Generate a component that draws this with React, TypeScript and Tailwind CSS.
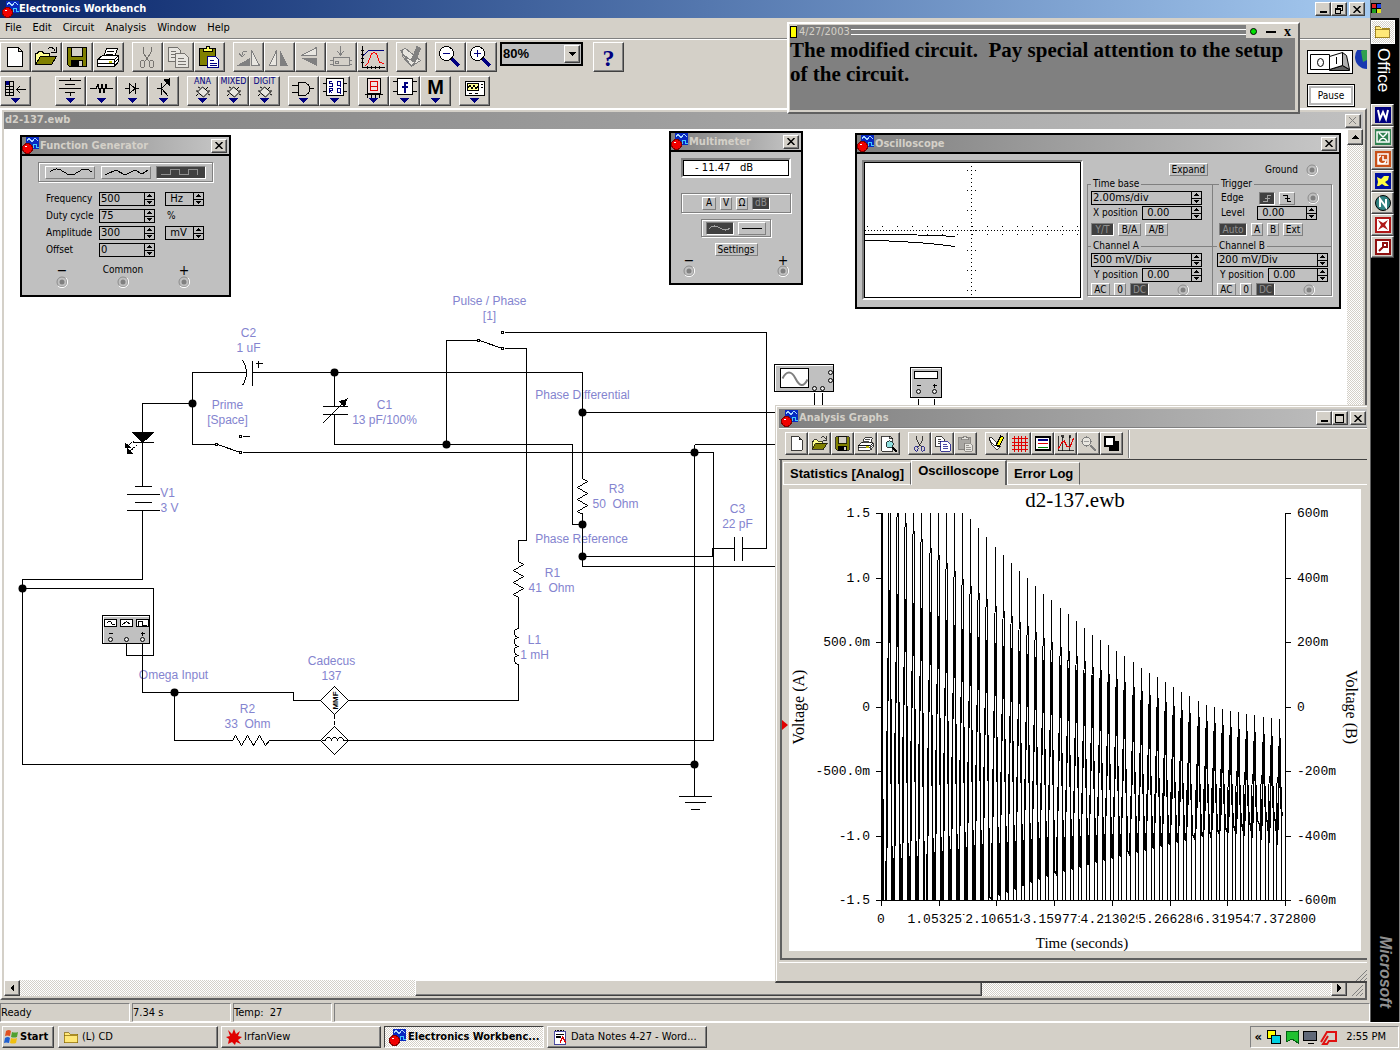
import { useState } from "react";
import type { ReactNode } from "react";

const raised =
  "border border-t-white border-l-white border-r-[#404040] border-b-[#404040] bg-[#d4d0c8] shadow-[inset_-1px_-1px_0_#808080]";
const dither =
  "bg-[repeating-conic-gradient(#ffffff_0_25%,#d4d0c8_0_50%)] bg-[length:2px_2px]";
const tahoma = "font-['DejaVu_Sans_Condensed','Noto_Sans',sans-serif]";

function Svg({ w, h, box, children }: { w: number; h: number; box?: string; children: ReactNode }) {
  return (
    <svg
      width={w}
      height={h}
      viewBox={box ?? `0 0 ${w} ${h}`}
      shapeRendering="crispEdges"
      fill="none"
      stroke="black"
      className="block shrink-0"
      aria-hidden="true"
    >
      {children}
    </svg>
  );
}

/* ---------- icons ---------- */

function Logo() {
  return (
    <Svg w={17} h={17}>
      <rect x="4" y="0" width="13" height="12" fill="#0828c0" stroke="none" />
      <path d="M5 4l2-3 3 4 3-4 3 3" stroke="#a8d8ff" />
      <path d="M9 10.500h2v-3h3v3h3" stroke="#40c8ff" />
      <circle cx="5.500" cy="11.500" r="5" fill="#f00000" stroke="#800000" />
      <rect x="3" y="9" width="2" height="1" fill="white" stroke="none" />
    </Svg>
  );
}

const icons: Record<string, ReactNode> = {
  new: <path d="M4.500 2.500h11l4 4v15h-15zM15.500 2.500v4h4" fill="white" />,
  open: (
    <>
      <path d="M1.500 19.500v-11h2l1-2h4l1 2h6v3" fill="#ffff90" />
      <path d="M1.500 19.500l5-8h16l-5 8z" fill="#808000" />
      <path d="M14 4c3-3 6-1 7 2M22 2v5h-5" />
    </>
  ),
  save: (
    <>
      <path d="M2.500 2.500h19v19h-17l-2-2z" fill="#808000" />
      <rect x="6.500" y="2.500" width="11" height="9" fill="#d4d0c8" />
      <rect x="6" y="15" width="12" height="7" fill="black" stroke="none" />
      <rect x="14" y="16" width="3" height="5" fill="#d4d0c8" stroke="none" />
    </>
  ),
  print: (
    <>
      <path d="M7.500 12.500l3-9h11l-3 9z" fill="white" />
      <path d="M11 6h7M10 9h7" />
      <path d="M1.500 14.500l5-4h16l-4 4zM1.500 14.500h17v7h-17zM18.500 14.500l4-4v6l-4 5" fill="white" />
      <path d="M2 18h16M19 17l3-3" />
      <path d="M13 16.500h3" stroke="#c0c000" strokeWidth="2" />
    </>
  ),
  cut: (
    <>
      <path d="M8 2v5l4 7M16 2v5l-4 7M12 14l-3 3M12 14l3 3" />
      <ellipse cx="7.500" cy="19" rx="2.500" ry="3.500" stroke="#000080" />
      <ellipse cx="16.500" cy="19" rx="2.500" ry="3.500" stroke="#000080" />
    </>
  ),
  copy: (
    <>
      <path d="M2.500 2.500h9l3 3v11h-12z" fill="white" />
      <path d="M5 6h5M5 9h6M5 12h4" />
      <path d="M9.500 8.500h9l4 4v10h-13z" fill="white" stroke="#000080" />
      <path d="M12 13h6M12 16h8M12 19h8" stroke="#000080" />
    </>
  ),
  paste: (
    <>
      <rect x="2.500" y="3.500" width="16" height="17" fill="#808000" />
      <path d="M6.500 6.500v-3h3v-2h3v2h3v3z" fill="#ffff60" />
      <path d="M10.500 11.500h8l3 3v8h-11z" fill="white" stroke="#000080" />
      <path d="M13 15h4M13 18h7M13 20h7" stroke="#000080" />
    </>
  ),
  rotate: (
    <>
      <path d="M15.500 20.500v-15l8 15z" fill="#e8e6e0" stroke="#808080" />
      <path d="M0 21l14-8v8z" fill="#808080" stroke="none" />
      <path d="M11 7c-3-2-5-1-5 3M3 8l3 4 3-3" stroke="#808080" />
    </>
  ),
  flipH: (
    <>
      <path d="M2.500 20.500l7-15v15z" fill="#e8e6e0" stroke="#808080" />
      <path d="M13 21v-16l8 16z" fill="#808080" stroke="none" />
    </>
  ),
  flipV: (
    <>
      <path d="M3.500 10.500h15v-8z" fill="#e8e6e0" stroke="#808080" />
      <path d="M3 13h16v8z" fill="#808080" stroke="none" />
    </>
  ),
  component: (
    <g stroke="#808080">
      <path d="M11.500 1v8M8 6l3.500 4L15 6M1 15.500h3M1 19.500h3M20 15.500h3M20 19.500h3" />
      <rect x="4.500" y="12.500" width="16" height="8" />
      <path d="M6 19v-3h3v3M6 18h3" />
    </g>
  ),
  graph: (
    <>
      <path d="M2.500 1v21h22M1 5h3M1 9h3M1 13h3M1 17h3M7 21v3M11 21v3M15 21v3M19 21v3" />
      <path d="M3 11l6-6h15" stroke="#000080" />
      <path d="M5 21l3-3 3-8c1-3 5-3 6 0l2 6c1 3 3 2 5 2" stroke="#ff0000" />
    </>
  ),
  note: (
    <>
      <path d="M1.500 5.500l5-2 15 12-9 6z" fill="#e8e6e0" stroke="#808080" />
      <path d="M3 4v7l9 10 4-3M5 10l6 5 4-4" stroke="#808080" />
      <path d="M20 2l-6 15" stroke="#808080" strokeWidth="5" />
    </>
  ),
  noteColor: (
    <>
      <path d="M1.500 3.500l5 1 11 11-5 6-7-7z" fill="white" />
      <path d="M4 9l6 6 5-5M2 4v5" />
      <path d="M20 2l-7 14" stroke="black" strokeWidth="6" />
      <path d="M20 3l-6 11" stroke="#ffff00" strokeWidth="3" />
    </>
  ),
  zoomOut: (
    <>
      <path d="M14 14l7 7" stroke="#000080" strokeWidth="4" />
      <circle cx="8.500" cy="8.500" r="7" fill="white" />
      <path d="M5 8.500h7" stroke="#000080" />
    </>
  ),
  zoomIn: (
    <>
      <path d="M14 14l7 7" stroke="#000080" strokeWidth="4" />
      <circle cx="8.500" cy="8.500" r="7" fill="white" />
      <path d="M5 8.500h7M8.500 5v7" stroke="#000080" />
    </>
  ),
  zoomGray: (
    <>
      <path d="M14 14l8 8" stroke="#808080" strokeWidth="3" />
      <circle cx="9" cy="9" r="6" fill="#e8e6e0" stroke="#808080" strokeWidth="2" />
      <path d="M6 9h6" stroke="#808080" />
    </>
  ),
  preview: (
    <>
      <path d="M2.500 1.500h11l4 4v17h-15zM13.500 1.500v4h4" fill="white" />
      <circle cx="13.500" cy="13" r="5" fill="#90e0e0" />
      <path d="M17 17l6 6" strokeWidth="3" />
    </>
  ),
  grid: <path d="M5 1v22M10 1v22M15 1v22M20 1v22M1 5h22M1 10h22M1 15h22M1 20h22" stroke="#e00000" strokeWidth="1.500" />,
  legend: (
    <>
      <rect x="2" y="3" width="20" height="18" fill="white" strokeWidth="2" />
      <path d="M5 7h14" stroke="#000080" strokeWidth="2" />
      <path d="M5 12h14" stroke="#e00000" strokeWidth="2" />
      <path d="M5 17h14" stroke="#008000" strokeWidth="2" />
    </>
  ),
  cursors: (
    <>
      <path d="M2 1v21h21M8 1v21M18 1v21M6 1h4l-2 3zM16 1h4l-2 3z" />
      <path d="M2 19l5-9 3-2 4 8 4 1 5-13" stroke="#e00000" strokeWidth="1.500" />
    </>
  ),
  invert: (
    <>
      <rect x="9" y="9" width="13" height="13" fill="black" />
      <rect x="3" y="3" width="12" height="12" fill="white" strokeWidth="2" />
    </>
  ),
  bin: (
    <>
      <path d="M2.500 2.500h8v14h-8zM6.500 2v15M2 7h9M2 10h9M2 13.500h9M14 10.500h9M17 7l-3 3.500 3 3.500" />
      <rect x="3" y="2" width="3" height="4" fill="#000080" stroke="none" />
    </>
  ),
  battery: <path d="M12.500 0v2M1 2.500h22M7 6.500h10M1 10.500h22M7 14.500h10M12.500 15v3" />,
  resistor: <path d="M1 10.500h6l2-4 2 8 2-8 2 8 2-8 1 4h6" />,
  diode: <path d="M5 10.500h4M9 5v11l6-5.500zM15.500 5v11M16 10.500h3" />,
  transistor: (
    <>
      <path d="M6 10.500h4M10.500 5v12M11 10l7-7M11 11l6 7" />
      <path d="M18 1v6l-5-5z" fill="black" />
    </>
  ),
  chip: (
    <>
      <path d="M12.500 3.500l8 7-7 8-8-7z" fill="#e0ddd4" />
      <path d="M11 3l-3-1M8 6l-3-1M5 10H3M13 19l2 1M17 15l3 1M20 11h2M15 5l3-3M7 14l-3 3" />
    </>
  ),
  gate: <path d="M1 7.500h6M1 14.500h6M7.500 4.500h5c8 0 8 13 0 13h-5zM19 10.500h4" />,
  flipflop: (
    <>
      <rect x="4.500" y="0.500" width="17" height="17" fill="white" />
      <path d="M1 5h3M1 13h3M22 5h3M22 13h3" />
      <path d="M10 3H7v2h3v3H7M7 15v-5h3v2H7l3 3M15 3h3v4h-3zM15 10h3v4h-3zM17 7l2 2M17 14l2 2" stroke="#000080" />
    </>
  ),
  display: (
    <>
      <rect x="6.500" y="0.500" width="13" height="15" fill="#f0e0e0" />
      <path d="M9.500 3.500h7v9h-7zM9.500 8h7" stroke="#e00000" />
      <path d="M4 16.500h18M6 17v3M10 17v3M14 17v3M18 17v3" />
    </>
  ),
  func: (
    <>
      <rect x="5.500" y="0.500" width="15" height="16" fill="white" />
      <path d="M1 3h4M1 13h4M21 3h4M21 13h4" />
      <path d="M15.500 4.500h-2l-1 1v9M10 8.500h6" stroke="#000080" strokeWidth="2" />
    </>
  ),
  scope: (
    <>
      <rect x="3.500" y="3.500" width="19" height="14" fill="white" />
      <rect x="5.500" y="5.500" width="11" height="7" fill="#ffff90" />
      <path d="M6 10l2-3 2 4 2-4 2 4 2-3M19 6h2M19 9h2M7 15h3M13 15h3" />
    </>
  ),
  folder: <path d="M1.500 5.500h7l2 2h11v13h-20zM2 9h19" fill="#ffe878" stroke="#806000" />,
  wordpad: (
    <>
      <rect x="3.500" y="3.500" width="16" height="19" fill="white" stroke="#000080" />
      <path d="M4 2h2M8 2h2M12 2h2M16 2h2M6 8h11M6 12h7" strokeWidth="2" />
      <path d="M12 20l4-8 4 8" stroke="#e00000" strokeWidth="2" />
    </>
  ),
};

function Icon({ name, size = 25, gray }: { name: string; size?: number; gray?: boolean }) {
  return (
    <span className={gray ? "opacity-45 grayscale" : ""}>
      <Svg w={size} h={size} box="0 0 25 25">
        {icons[name]}
      </Svg>
    </span>
  );
}

/* ---------- main toolbars ---------- */

type Tool = { icon: string; gray?: boolean };

const toolGroups: Tool[][] = [
  [{ icon: "new" }, { icon: "open" }, { icon: "save" }, { icon: "print" }],
  [{ icon: "cut", gray: true }, { icon: "copy", gray: true }, { icon: "paste" }],
  [{ icon: "rotate" }, { icon: "flipH" }, { icon: "flipV" }, { icon: "component" }, { icon: "graph" }],
  [{ icon: "note" }],
  [{ icon: "zoomOut" }, { icon: "zoomIn" }],
];

const partGroups: { icon: string; caption?: string }[][] = [
  [{ icon: "battery" }, { icon: "resistor" }, { icon: "diode" }, { icon: "transistor" }],
  [
    { icon: "chip", caption: "ANA" },
    { icon: "chip", caption: "MIXED" },
    { icon: "chip", caption: "DIGIT" },
  ],
  [{ icon: "gate" }, { icon: "flipflop" }],
  [{ icon: "display" }, { icon: "func" }, { icon: "M" }],
  [{ icon: "scope" }],
];

function DropMark() {
  return (
    <Svg w={9} h={5}>
      <path d="M0 0h9L4.500 5z" fill="#000080" stroke="none" />
    </Svg>
  );
}

function PartButton({ icon, caption }: { icon: string; caption?: string }) {
  return (
    <button aria-label={caption ?? icon} className={`flex h-[30px] w-[31px] flex-col items-center justify-end pb-[2px] ${raised}`}>
      {caption && (
        <span className="font-['DejaVu_Sans',sans-serif] text-[8px] leading-[8px] text-[#000080]">{caption}</span>
      )}
      {icon === "M" ? (
        <span className="font-['Liberation_Sans',sans-serif] text-[20px] leading-[21px] font-bold">M</span>
      ) : caption ? (
        <svg width="16" height="12" viewBox="0 0 16 12" className="block shrink-0" stroke="black" fill="#e8e6e0" aria-hidden="true">
          <path d="M7.500 1l6 5-5 5-6-5z" />
          <path d="M5 2L3 1M11 3l2-2M13 8l2 1M3 8l-2 2M1 5h2M13 5h2" />
        </svg>
      ) : (
        <Svg w={25} h={20}>{icons[icon]}</Svg>
      )}
      <DropMark />
    </button>
  );
}

function Toolbars() {
  const [zoom, setZoom] = useState("80%");
  return (
    <div className="flex h-[70px] flex-col gap-1 border-t border-[#808080] pt-[3px] shadow-[inset_0_1px_0_#fff]">
      <div className="flex">
        {toolGroups.map((group, i) => (
          <div key={i} className="mr-2 flex">
            {group.map((t) => (
              <button key={t.icon} aria-label={t.icon} className={`flex h-[30px] w-[31px] items-center justify-center ${raised}`}>
                <Icon name={t.icon} gray={t.gray} />
              </button>
            ))}
          </div>
        ))}
        <div className="-ml-[5px] flex h-6 w-[83px] items-center border-2 border-black bg-[#c0c0c0] pr-px">
          <select
            aria-label="Zoom"
            value={zoom}
            onChange={(e) => setZoom(e.target.value)}
            className="min-w-0 flex-1 appearance-none bg-transparent pl-px font-['Liberation_Sans',sans-serif] text-[13px] leading-4 font-bold outline-none"
          >
            <option>50%</option>
            <option>80%</option>
            <option>100%</option>
          </select>
          <span className={`flex h-[18px] w-4 items-center justify-center ${raised}`}>
            <Svg w={7} h={4}>
              <path d="M0 0h7L3.500 4z" fill="black" stroke="none" />
            </Svg>
          </span>
        </div>
        <button
          aria-label="Help"
          className={`ml-[10px] h-[30px] w-[31px] pt-[2px] font-['Liberation_Serif',serif] text-[24px] leading-6 font-bold text-[#000080] ${raised}`}
        >
          ?
        </button>
      </div>
      <div className="flex">
        <button aria-label="Parts bin" className={`mr-6 flex h-[30px] w-[31px] flex-col items-center justify-end pb-[2px] ${raised}`}>
          <Svg w={25} h={19}>{icons.bin}</Svg>
          <DropMark />
        </button>
        {partGroups.map((group, i) => (
          <div key={i} className="mr-2 flex">
            {group.map((p) => (
              <PartButton key={p.caption ?? p.icon} {...p} />
            ))}
          </div>
        ))}
      </div>
    </div>
  );
}

/* ---------- instruments ---------- */

function CloseButton() {
  return (
    <button aria-label="Close" className={`flex h-[14px] w-4 items-center justify-center ${raised}`}>
      <svg width="8" height="7" className="block" stroke="black" strokeWidth="1.500" aria-hidden="true">
        <path d="M.5 0l7 7M7.500 0l-7 7" />
      </svg>
    </button>
  );
}

function Instrument({ title, className, children }: { title: string; className: string; children: ReactNode }) {
  return (
    <section className={`absolute flex flex-col border-2 border-black bg-[#c0c0c0] ${className}`}>
      <header className="flex h-[19px] shrink-0 items-center border-b-2 border-black bg-linear-to-r from-[#808080] to-[#c8c8c8] pr-[2px]">
        <Logo />
        <h2 className={`flex-1 pl-px text-[11px] leading-4 font-bold text-[#d4d0c8] ${tahoma}`}>{title}</h2>
        <CloseButton />
      </header>
      <div className="flex-1 font-['DejaVu_Sans_Condensed','Noto_Sans',sans-serif] text-[10px] leading-3">{children}</div>
    </section>
  );
}

function Spin({ value, label, className }: { value: string; label: string; className: string }) {
  return (
    <span className={`flex h-[14px] shrink-0 border border-black ${className}`}>
      <input
        aria-label={label}
        defaultValue={value}
        className="min-w-0 flex-1 bg-transparent pl-px font-['DejaVu_Sans',sans-serif] text-[10px] leading-3 outline-none"
      />
      <Svg w={10} h={12}>
        <path d="M0.500 0v12M0 6h10" />
        <path d="M2 4h7L5.500 1zM2 8h7l-3.500 3z" fill="black" stroke="none" />
      </Svg>
    </span>
  );
}

function Terminal() {
  return (
    <svg width="12" height="12" className="block shrink-0" aria-hidden="true">
      <circle cx="6" cy="6" r="5" fill="none" stroke="#8c8c8c" />
      <path d="M10 2a5.500 5.500 0 0 1-8 8" fill="none" stroke="white" />
      <circle cx="6" cy="6" r="2.500" fill="#808080" />
    </svg>
  );
}

function Small({ children, on, className = "", label }: { children: ReactNode; on?: boolean; className?: string; label?: string }) {
  return (
    <button
      aria-label={label}
      className={`flex h-[13px] items-center justify-center border text-[10px] leading-3 ${
        on
          ? "border-t-[#808080] border-l-[#808080] border-r-white border-b-white bg-[#404040] text-[#909090]"
          : "border-t-white border-l-white border-r-[#808080] border-b-[#808080]"
      } ${className}`}
    >
      {children}
    </button>
  );
}

const groove = "border border-[#808080] shadow-[1px_1px_0_#fff,inset_1px_1px_0_#fff]";

function FunctionGenerator() {
  const rows = [
    { label: "Frequency", value: "500", unit: "Hz" },
    { label: "Duty cycle", value: "75" },
    { label: "Amplitude", value: "300", unit: "mV" },
    { label: "Offset", value: "0" },
  ];
  return (
    <Instrument title="Function Generator" className="top-[6px] left-4 h-[162px] w-[211px]">
      <div className="px-4 pt-[6px]">
        <div className={`flex h-5 items-center justify-between px-[6px] ${groove}`}>
          <Small label="Sine" className="w-[50px]">
            <Svg w={46} h={8}>
              <path d="M3 4c4-4 9-4 14 0s9 4 14 0 9-4 14 0" />
            </Svg>
          </Small>
          <Small label="Triangle" className="w-[50px]">
            <Svg w={46} h={8}>
              <path d="M2 7l11-5 9 5 10-5 7 4 6-4" />
            </Svg>
          </Small>
          <Small label="Square" on className="w-[50px]">
            <Svg w={46} h={8}>
              <path d="M3 6.500h9v-5h9v5h9v-5h9v5" stroke="#909090" />
            </Svg>
          </Small>
        </div>
      </div>
      <div className="mt-[10px] flex flex-col gap-[3px] pl-6">
        {rows.map((r) => (
          <label key={r.label} className="flex h-[14px] items-center">
            <span className="w-[53px] shrink-0">{r.label}</span>
            <Spin label={r.label} value={r.value} className="w-14" />
            {r.unit ? (
              <Spin label={`${r.label} unit`} value={` ${r.unit}`} className="ml-[10px] w-[39px]" />
            ) : (
              r.label === "Duty cycle" && <span className="ml-3">%</span>
            )}
          </label>
        ))}
      </div>
      <div className="mt-[7px] flex justify-between pr-[39px] pl-[34px] text-center">
        <div className="flex w-3 flex-col items-center text-[14px]">−<Terminal /></div>
        <div className="flex w-3 flex-col items-center">Common<Terminal /></div>
        <div className="flex w-3 flex-col items-center text-[14px]">+<Terminal /></div>
      </div>
    </Instrument>
  );
}

function Multimeter() {
  return (
    <Instrument title="Multimeter" className="top-[2px] left-[665px] h-[154px] w-[134px]">
      <div className="flex flex-col items-center px-[10px] pt-[6px]">
        <div className="w-full border-2 border-t-[#808080] border-l-[#808080] border-r-white border-b-white">
          <output className="block h-4 border border-black bg-white pl-[11px] font-['DejaVu_Sans',sans-serif] leading-[14px] whitespace-pre">
            - 11.47   dB
          </output>
        </div>
        <div className={`mt-[15px] flex h-5 w-full items-center justify-center gap-1 ${groove}`}>
          <Small className="w-[14px]">A</Small>
          <Small className="w-3">V</Small>
          <Small className="w-3">Ω</Small>
          <Small on className="w-[18px]">dB</Small>
        </div>
        <div className={`mt-[6px] flex h-[18px] items-center justify-center gap-1 px-1 ${groove}`}>
          <Small label="AC" on className="h-[10px] w-7">
            <Svg w={24} h={6}>
              <path d="M1 4c4-5 8-3 11-1s7 3 10 0" stroke="#a0a0a0" />
            </Svg>
          </Small>
          <Small label="DC" className="h-[10px] w-7">
            <Svg w={24} h={6}>
              <path d="M2 3.500h20" />
            </Svg>
          </Small>
        </div>
        <Small className="mt-[6px] w-[43px]">Settings</Small>
      </div>
      <div className="flex justify-between px-3">
        <div className="flex flex-col items-center text-[14px] leading-[9px]">−<Terminal /></div>
        <div className="flex flex-col items-center text-[14px] leading-[9px]">+<Terminal /></div>
      </div>
    </Instrument>
  );
}

function Channel({ name, scale }: { name: string; scale: string }) {
  return (
    <fieldset className="flex min-w-0 flex-col gap-px border-t border-[#808080] pt-[2px] pl-1">
      <legend className="px-[2px] leading-[10px]">{`Channel ${name}`}</legend>
      <Spin label={`Channel ${name} scale`} value={scale} className="w-[111px]" />
      <label className="flex w-[111px] items-center justify-between">
        <span className="pl-[3px]">Y position</span>
        <Spin label="Y position" value=" 0.00" className="w-[60px]" />
      </label>
      <div className="flex items-center gap-1">
        <Small className="w-[19px]">AC</Small>
        <Small className="w-3">0</Small>
        <Small on className="w-[19px]">DC</Small>
        <span className="pl-6"><Terminal /></span>
      </div>
    </fieldset>
  );
}

function Scope() {
  return (
    <Instrument title="Oscilloscope" className="top-1 left-[851px] h-[176px] w-[486px]">
      <div className="flex h-full gap-1 pt-[6px] pr-[7px] pl-[5px]">
        <div className="h-[140px] border-2 border-t-[#808080] border-l-[#808080] border-r-white border-b-white">
          <Svg w={217} h={136}>
            <rect x="0.500" y="0.500" width="216" height="135" fill="white" />
            <path d="M1 68.500h216" strokeDasharray="1 2" />
            <path d="M107.500 4v130" strokeDasharray="1 3" />
            <path d="M3 64.500h212M3 72.500h212" strokeDasharray="1 14" />
            <path d="M103.500 8v122M111.500 8v122" strokeDasharray="1 19" />
            <path d="M1 72.500h32l40 1 18 1" />
            <path d="M1 78.500h14l38 2 22 2 16 2" />
          </Svg>
        </div>
        <div className="flex-1">
          <div className="flex h-[19px] items-center justify-end">
            <Small className="mr-[57px] w-[39px]">Expand</Small>
            <span className="mr-2">Ground</span>
            <span className="mr-[14px]"><Terminal /></span>
          </div>
          <div className="relative grid grid-cols-[125px_1fr] before:pointer-events-none before:absolute before:inset-x-0 before:top-[5px] before:bottom-0 before:border before:border-t-0 before:border-[#808080] before:shadow-[1px_1px_0_#fff]">
            <fieldset className="flex min-w-0 flex-col gap-px border-t border-[#808080] pt-[2px] pb-[5px] pl-1">
              <legend className="px-[2px] leading-[10px]">Time base</legend>
              <Spin label="Time base" value="2.00ms/div" className="w-[111px]" />
              <label className="flex w-[111px] items-center justify-between">
                <span className="pl-[2px]">X position</span>
                <Spin label="X position" value=" 0.00" className="w-[60px]" />
              </label>
              <div className="flex gap-1 pt-[2px]">
                <Small on className="w-[23px]">Y/T</Small>
                <Small className="w-[23px]">B/A</Small>
                <Small className="w-[23px]">A/B</Small>
              </div>
            </fieldset>
            <fieldset className="flex min-w-0 flex-col gap-px border-t border-l border-[#808080] pt-[2px] pr-[13px] pb-[5px] pl-[6px]">
              <legend className="px-[2px] leading-[10px]">Trigger</legend>
              <div className="flex h-[14px] items-center pl-[2px]">
                <span className="w-[38px]">Edge</span>
                <Small label="Rising edge" on className="h-[10px] w-4">
                  <Svg w={10} h={8}><path d="M1 7h4V1h4M3 4h5" stroke="#a0a0a0" /></Svg>
                </Small>
                <Small label="Falling edge" className="ml-1 h-[10px] w-4">
                  <Svg w={10} h={8}><path d="M1 1h4v6h4M3 4h5" /></Svg>
                </Small>
                <span className="ml-auto"><Terminal /></span>
              </div>
              <label className="flex items-center pl-[2px]">
                <span className="w-9">Level</span>
                <Spin label="Level" value=" 0.00" className="w-[60px]" />
              </label>
              <div className="flex gap-1 pt-[2px]">
                <Small on className="w-7">Auto</Small>
                <Small className="w-3">A</Small>
                <Small className="w-3">B</Small>
                <Small className="w-5">Ext</Small>
              </div>
            </fieldset>
            <Channel name="A" scale="500 mV/Div" />
            <div className="border-l border-[#808080]">
              <Channel name="B" scale="200 mV/Div" />
            </div>
          </div>
        </div>
      </div>
    </Instrument>
  );
}

/* ---------- schematic ---------- */

const wires = [
  "M192 403H142V432M142 442V486M142 510V579H22V764H694",
  "M192 403V372H246M252 372H582V478",
  "M192 403V444H215M242 452H713V740H348",
  "M334 372V406M334 414V444H572V524H582",
  "M446 444V340H477M504 348H526V540H518V561M518 596V628M518 664V700H348",
  "M504 332H766V548H742M734 548H712V556H582",
  "M582 412H775M694 444H775M694 444V796M582 512V566H775",
  "M22 588H153V655H126V643M142 643V692H293V700H320",
  "M174 692V740H232M269 740H320M242 436H249",
  "M814 392V410M822 392V410M918 398V410M934 398V410",
];

const symbols = [
  "M132 442H153M134 486H151M126 494H159M134 502H151M126 510H159",
  "M252 360V385M242 360Q250 372 242 385M255 363H262M258 360V367",
  "M322 406H347M322 414H347M322 423L347 398",
  "M217 444L240 452M479 340L502 348",
  "M734 536V560M742 536V560M678 796H711M684 802H705M690 809H699",
  "M582 478l5 3-10 6 10 6-10 6 10 6-10 6 5 3",
  "M518 561l5 3-10 6 10 6-10 6 10 6-10 6 5 3",
  "M232 740l3-5 6 10 6-10 6 10 6-10 6 10 4-5",
  "M518 628q-5 1-4 5t4 4q-5 1-4 5t4 4q-5 1-4 5t4 4q-5 1-4 5t4 4",
  "M334 686l14 14-14 14-14-14zM334 726l14 14-14 14-14-14z",
  "M321 740h4q0-3 3-3t3 3q0-3 3-3t3 3q0-3 3-3t3 3h4",
];

const nodes = [
  [192, 403], [334, 372], [446, 444], [582, 412], [694, 452], [582, 524], [582, 556], [22, 588], [174, 692], [694, 764],
];

const contacts = [[216, 444], [240, 452], [240, 436], [478, 340], [502, 348], [502, 332]];

const partLabels: [number, number, string][] = [
  [248, 336, "C2"], [248, 351, "1 uF"],
  [489, 304, "Pulse / Phase"], [489, 319, "[1]"],
  [227, 408, "Prime"], [227, 423, "[Space]"],
  [384, 408, "C1"], [384, 423, "13 pF/100%"],
  [167, 496, "V1"], [169, 511, "3 V"],
  [582, 398, "Phase Differential"],
  [616, 492, "R3"], [615, 507, "50\u00a0 Ohm"],
  [737, 512, "C3"], [737, 527, "22 pF"],
  [581, 542, "Phase Reference"],
  [552, 576, "R1"], [551, 591, "41\u00a0 Ohm"],
  [534, 643, "L1"], [534, 658, "1 mH"],
  [331, 664, "Cadecus"], [331, 679, "137"],
  [247, 712, "R2"], [247, 727, "33\u00a0 Ohm"],
  [173, 678, "Omega Input"],
];

function Schematic() {
  return (
    <svg width="1343" height="851" viewBox="3.500 128.500 1343 851" className="absolute top-0 left-0 max-w-none" fill="none" stroke="black">
      <g fill="#8484cf" stroke="none" textAnchor="middle" fontFamily="'Liberation Sans', sans-serif" fontSize="12">
        {partLabels.map(([x, y, text]) => (
          <text key={`${x}-${y}`} x={x} y={y}>{text}</text>
        ))}
      </g>
      <g shapeRendering="crispEdges">
        {wires.map((d) => <path key={d} d={d} />)}
        {symbols.map((d) => <path key={d} d={d} />)}
        <path d="M334 714V726" strokeDasharray="4 2" />
        <path d="M132 432H153L142 442z" fill="black" />
        <path d="M134 440l-9 7M137 444l-10 9" strokeDasharray="2 1" />
        <path d="M125 443v4h5zM127 448v5h5z" fill="black" />
        <path d="M346 399l-7 2 5 5z" fill="black" />
        {contacts.map(([x, y]) => (
          <rect key={`${x}-${y}`} x={x - 1} y={y - 1} width="2" height="2" fill="white" />
        ))}
      </g>
      {nodes.map(([x, y]) => (
        <circle key={`${x}-${y}`} cx={x} cy={y} r="4" fill="black" stroke="none" />
      ))}
      <text transform="translate(337 700) rotate(-90)" textAnchor="middle" fill="black" stroke="none" fontFamily="'Liberation Sans', sans-serif" fontSize="8" fontWeight="bold">MMF</text>

      <g shapeRendering="crispEdges">
        <rect x="102" y="615" width="47" height="28" fill="#c0c0c0" />
        <path d="M103 642V616H148" stroke="white" />
        <rect x="104" y="619" width="12" height="7" fill="white" />
        <rect x="120" y="619" width="12" height="7" fill="white" />
        <rect x="136" y="619" width="12" height="7" fill="white" />
        <path d="M106 623l2-2h2l2 3h2M122 624l4-3 4 3M138 625v-4h4v4h4M108 633h4M140 633h4M142 631v4" />
        <rect x="774" y="364" width="59" height="27" fill="#c0c0c0" />
        <path d="M775 390V365H832" stroke="white" />
        <rect x="780" y="368" width="28" height="19" fill="white" />
        <rect x="910" y="367" width="31" height="30" fill="#c0c0c0" />
        <path d="M911 396V368H940" stroke="white" />
        <rect x="914" y="371" width="23" height="7" fill="white" />
        <path d="M916 385h4M932 385h4M934 383v4" />
      </g>
      <path d="M782 378c4-8 9-8 13 0s8 9 12 1" stroke="#808080" strokeWidth="2" />
      {[[110, 639], [126, 639], [142, 639], [814, 388], [822, 388], [830, 372], [830, 380], [918, 391], [934, 391]].map(([x, y]) => (
        <circle key={`${x}-${y}`} cx={x} cy={y} r="2" fill="#e8e8e8" />
      ))}
    </svg>
  );
}

/* ---------- analysis graphs ---------- */

const PERIOD = 8.12;

// envelope points are [x, y] in window pixels
const upperA = [[881, 385], [963, 508], [971, 520], [1003, 555], [1044, 594], [1093, 635], [1142, 668], [1175, 688], [1208, 706], [1241, 713], [1285, 720]];
const upperB = [[881, 585], [922, 608], [979, 637], [1044, 660], [1110, 681], [1208, 716], [1285, 736]];
const lowerB = [[881, 960], [983, 898], [1048, 872], [1115, 853], [1180, 837], [1244, 822], [1285, 815]];

function at(points: number[][], x: number) {
  for (let i = 1; i < points.length; i++) {
    const [x0, y0] = points[i - 1];
    const [x1, y1] = points[i];
    if (x <= x1) return y0 + ((y1 - y0) * (x - x0)) / (x1 - x0);
  }
  return points[points.length - 1][1];
}

// channel A swings past the bottom of the axis, channel B stays inside its own envelope
function traces() {
  let a = "M882 513V900";
  let b = "M882 700L884 960";
  for (let i = 0; i < 49; i++) {
    const x = Math.round(889 + i * PERIOD) + 0.5;
    const top = at(upperA, x);
    const mid = at(upperB, x);
    const low = at(lowerB, x);
    a += `M${x - 3} 900V${low - 30}L${x - 1} ${mid + 40}L${x} ${top}L${x + 1} ${mid + 20}L${x + 2} ${low}V900`;
    b += `L${x - 4} ${low + 6}L${x - 2} ${mid + 110}L${x} ${mid}L${x + 1} ${mid + 70}L${x + 3} ${low}`;
  }
  return { a, b };
}

const ticksLeft = ["1.5", "1.0", "500.0m", "0", "-500.0m", "-1.0", "-1.5"];
const ticksRight = ["600m", "400m", "200m", "0", "-200m", "-400m", "-600m"];
const ticksBottom = ["0", "1.053257", "2.106514", "3.159771", "4.213029", "5.266286", "6.319543", "7.372800"];

function Plot() {
  const { a, b } = traces();
  return (
    <svg width="572" height="462" viewBox="789 489 572 462" className="block bg-white" role="img" aria-label="Oscilloscope graph">
      <defs>
        <clipPath id="plot-area">
          <rect x="880" y="513" width="405" height="388" />
        </clipPath>
      </defs>
      <g fontFamily="'Liberation Serif', serif" textAnchor="middle">
        <text x="1075" y="507" fontSize="21">d2-137.ewb</text>
        <text x="1082" y="948" fontSize="15">Time (seconds)</text>
        <text transform="translate(804 707) rotate(-90)" fontSize="16">Voltage (A)</text>
        <text transform="translate(1346 707) rotate(90)" fontSize="16">Voltage (B)</text>
      </g>
      <g fill="none" stroke="black" shapeRendering="crispEdges">
        <g clipPath="url(#plot-area)">
          <path d={a} />
          <path d={b} strokeWidth="1.500" />
        </g>
        <path d="M881.500 513V901M1285.500 513V901M876 900.500H1291" />
        {ticksLeft.map((_, i) => (
          <path key={i} d={`M876 ${513.5 + i * 64.5}h5M1286 ${513.5 + i * 64.5}h5`} />
        ))}
        {ticksBottom.map((_, i) => (
          <path key={i} d={`M${881.5 + i * 57.7} 901v5`} />
        ))}
      </g>
      <g fontFamily="'Liberation Mono', monospace" fontSize="13">
        {ticksLeft.map((t, i) => (
          <text key={t} x="870" y={517 + i * 64.5} textAnchor="end">{t}</text>
        ))}
        {ticksRight.map((t, i) => (
          <text key={t} x="1297" y={517 + i * 64.5}>{t}</text>
        ))}
        {ticksBottom.map((t, i) => (
          <g key={t}>
            <rect x={881 + i * 57.7 - t.length * 4} y="911" width={t.length * 8} height="15" fill="white" />
            <text x={881 + i * 57.7} y="923" textAnchor="middle">{t}</text>
          </g>
        ))}
      </g>
    </svg>
  );
}

const graphTools: Tool[][] = [
  [{ icon: "new" }, { icon: "open" }, { icon: "save" }, { icon: "print" }, { icon: "preview" }],
  [{ icon: "cut" }, { icon: "copy" }, { icon: "paste", gray: true }],
  [{ icon: "noteColor" }, { icon: "grid" }, { icon: "legend" }, { icon: "cursors" }, { icon: "zoomGray" }, { icon: "invert" }],
];

const graphTabs = ["Statistics [Analog]", "Oscilloscope", "Error Log"];

function WindowButtons({ restore }: { restore?: boolean }) {
  return (
    <div className="flex">
      <button aria-label="Minimize" className={`flex h-[14px] w-4 items-end justify-center pb-[2px] ${raised}`}>
        <Svg w={7} h={2}><rect width="7" height="2" fill="black" stroke="none" /></Svg>
      </button>
      <button aria-label={restore ? "Restore" : "Maximize"} className={`flex h-[14px] w-4 items-center justify-center ${raised}`}>
        <Svg w={10} h={9}>
          {restore ? (
            <path d="M3.500 3V.5h5v5H7M3 1.500h6M1.500 3.500h5v5h-5zM1 4.500h6" />
          ) : (
            <path d="M.5.500h8v8h-8zM0 1.500h9" />
          )}
        </Svg>
      </button>
      <span className="w-[2px]" />
      <CloseButton />
    </div>
  );
}

function AnalysisGraphs() {
  const [tab, setTab] = useState("Oscilloscope");
  return (
    <section className="absolute top-[405px] right-[3px] left-[775px] flex h-[578px] flex-col border-t border-b-2 border-l border-t-[#d4d0c8] border-b-[#404040] border-l-[#d4d0c8] bg-[#d4d0c8] pt-[3px] pl-[3px] shadow-[inset_1px_1px_0_#fff]">
      <header className="flex h-[18px] shrink-0 items-center bg-linear-to-r from-[#808080] to-[#c0c0c0] pr-px pl-[2px]">
        <Logo />
        <h2 className={`flex-1 pl-px text-[11px] font-bold text-[#d4d0c8] ${tahoma}`}>Analysis Graphs</h2>
        <WindowButtons />
      </header>
      <div className="flex h-[33px] shrink-0 items-center border-t border-b border-t-[#808080] border-b-[#404040] pl-[6px] shadow-[inset_0_1px_0_#fff]">
        {graphTools.map((group, i) => (
          <div key={i} className="mr-2 flex last-of-type:mr-[6px]">
            {group.map((t) => (
              <button key={t.icon} aria-label={t.icon} className={`flex h-[23px] w-[23px] items-center justify-center ${raised}`}>
                <Icon name={t.icon} size={18} gray={t.gray} />
              </button>
            ))}
          </div>
        ))}
        <span className="h-7 border-l border-white shadow-[-1px_0_0_#808080]" />
      </div>
      <div className="ml-px border-b-2 border-l-2 border-[#606060]">
        <div role="tablist" className="flex h-[25px] items-end pl-px font-['Liberation_Sans',sans-serif] text-[13px] font-bold">
          {graphTabs.map((t) => (
            <button
              key={t}
              role="tab"
              aria-selected={tab === t}
              onClick={() => setTab(t)}
              className={`border-t border-l border-white px-[6px] whitespace-nowrap ${
                tab === t ? "h-[25px] border-r-2 border-r-[#606060] pb-1" : "h-[23px] border-r border-b border-r-[#606060]"
              }`}
            >
              {t}
            </button>
          ))}
          <span className="h-px flex-1 bg-white" />
        </div>
        <div className="relative flex pt-1 pr-[6px] pb-[7px] pl-[7px]">
          <Plot />
          <svg width="6" height="10" className="absolute top-[235px] left-0" aria-hidden="true">
            <path d="M0 0l6 5-6 5z" fill="#e00000" />
          </svg>
        </div>
      </div>
      <div className="mt-[2px] flex flex-1 items-end justify-end border-t border-white">
        <Grip />
      </div>
    </section>
  );
}

function Grip() {
  return (
    <svg width="12" height="12" className="block" stroke="#808080" aria-hidden="true">
      <path d="M1 12L12 1M5 12L12 5M9 12L12 9" />
    </svg>
  );
}

/* ---------- shell ---------- */

function StickyNote() {
  return (
    <aside className="absolute top-[22px] left-[787px] z-10 h-[92px] w-[513px] border-2 border-t-white border-l-white border-r-[#606060] border-b-[#606060] bg-[#d4d0c8] p-px pr-[3px] pb-[2px]">
      <div className="flex h-[13px] items-center">
        <span className="h-3 w-[7px] border border-black bg-[#ffff00]" />
        <div className="flex h-[13px] flex-1 items-center gap-px bg-[#808080] pl-[2px]">
          <time className="font-['DejaVu_Sans_Condensed','Noto_Sans',sans-serif] text-[11px] leading-3 text-[#d4d0c8]">4/27/2003</time>
          <span className="h-[6px] flex-1 border-y border-white" />
        </div>
        <div className="flex w-[49px] items-center justify-between px-1">
          <span className="size-[7px] rounded-full border border-black bg-[#00e000]" />
          <button aria-label="Roll up" className="h-[2px] w-[10px] bg-black" />
          <button aria-label="Close note" className="font-['Liberation_Serif',serif] text-[14px] leading-3 font-bold">x</button>
        </div>
      </div>
      <p className="h-[72px] bg-[#808080] font-['Liberation_Serif',serif] text-[21px] leading-6 font-bold">
        The modified circuit.&nbsp; Pay special attention to the setup of the circuit.
      </p>
    </aside>
  );
}

function PowerControls() {
  return (
    <div className="absolute top-[50px] right-[3px] flex flex-col gap-[10px]">
      <div className="flex items-start">
        <button aria-label="Power switch" className="border border-black bg-white p-px">
          <svg width="42" height="20" className="block" fill="white" stroke="black" aria-hidden="true">
            <path d="M20.500 17.500l13-4 7 4v1h-20z" fill="#606060" />
            <path d="M33.500.500l4 3 3 14-7-4z" fill="#b0b0b0" />
            <path d="M1.500 2.500h19v15h-19z" />
            <path d="M20.500 4.500l13-4v13l-13 4z" />
            <ellipse cx="11.500" cy="10.500" rx="3" ry="4" />
            <path d="M27.500 5v7" />
          </svg>
        </button>
        <svg width="14" height="24" className="block" aria-hidden="true">
          <circle cx="14" cy="7" r="12" fill="#1838b0" />
          <path d="M8 1l6-3v12l-4 2-1-5z" fill="#30a050" />
        </svg>
      </div>
      <button className="flex h-[23px] w-12 items-center justify-center border border-black bg-white p-px">
        <span className="flex h-full w-full items-center justify-center border-2 border-[#b8b8b8] font-['DejaVu_Sans_Condensed','Noto_Sans',sans-serif] text-[10px]">
          Pause
        </span>
      </button>
    </div>
  );
}

function ScrollArrow({ d, label }: { d: string; label: string }) {
  return (
    <button aria-label={label} className={`flex size-4 shrink-0 items-center justify-center ${raised}`}>
      <Svg w={8} h={8}><path d={d} fill="black" stroke="none" /></Svg>
    </button>
  );
}

function CircuitWindow() {
  return (
    <main className="mr-[3px] flex min-h-0 flex-1 flex-col border-2 border-t-white border-l-white border-r-[#606060] border-b-[#606060] p-[2px]">
      <header className="flex h-[17px] shrink-0 items-center bg-linear-to-r from-[#808080] to-[#c0c0c0] pr-[2px]">
        <h2 className={`flex-1 pl-px text-[11px] font-bold text-[#d4d0c8] ${tahoma}`}>d2-137.ewb</h2>
        <button aria-label="Close circuit" className={`flex h-[14px] w-4 items-center justify-center ${raised}`}>
          <Svg w={8} h={7}><path d="M0 0l7 7M7 0l-7 7" stroke="#808080" /></Svg>
        </button>
      </header>
      <div className="flex min-h-0 flex-1">
        <div className="relative min-w-0 flex-1 overflow-hidden bg-white">
          <Schematic />
          <FunctionGenerator />
          <Multimeter />
          <Scope />
        </div>
        <div className={`w-4 ${dither}`}>
          <ScrollArrow label="Scroll up" d="M0 6h8L4 2z" />
        </div>
      </div>
      <div className="flex h-4 shrink-0">
        <ScrollArrow label="Scroll left" d="M6 0v8L2 4z" />
        <div className={`flex flex-1 ${dither}`}>
          <span className="grow-[396]" />
          <span className={`grow-[566] ${raised}`} />
          <span className="grow-[350]" />
        </div>
        <ScrollArrow label="Scroll right" d="M2 0v8l4-4z" />
        <span className="flex w-4 items-end justify-end"><Grip /></span>
      </div>
    </main>
  );
}

const officeApps = [
  { name: "Word", bg: "#000080", mark: <path d="M4 4l2 9 3-7 3 7 2-9" stroke="white" strokeWidth="2" /> },
  { name: "Excel", bg: "#308050", mark: <path d="M3 4h12v10H3zM5 5l8 8M13 5l-8 8" stroke="white" strokeWidth="1.500" /> },
  { name: "PowerPoint", bg: "#c85018", mark: <path d="M4 4h10v10H4zM9 6v4h4M7 6a4 4 0 1 0 5 5" stroke="white" strokeWidth="1.500" /> },
  { name: "Outlook", bg: "#0010a0", mark: <path d="M3 5l4 2 3-3h5l-1 4-3 2 4 4h-4l-3-2-3 2H3l1-4z" fill="#ffff40" stroke="none" /> },
  {
    name: "Netscape",
    bg: "#d4d0c8",
    mark: (
      <>
        <circle cx="9" cy="9" r="7.500" fill="#308080" stroke="black" />
        <path d="M6 13V5l6 8V5" stroke="white" strokeWidth="2" />
      </>
    ),
  },
  {
    name: "IrfanView",
    bg: "#b01818",
    mark: (
      <>
        <path d="M3 3h12v12H3z" fill="white" />
        <path d="M4 4l5 3 5-3-3 5 3 5-5-3-5 3 3-5z" fill="#b01818" />
      </>
    ),
  },
  {
    name: "Access",
    bg: "#901010",
    mark: (
      <>
        <path d="M3 3h12v12H3z" fill="white" />
        <path d="M5 13l4-4M9 5h4v4H9z" stroke="#901010" strokeWidth="2" />
      </>
    ),
  },
];

function OfficeBar() {
  return (
    <nav className="flex w-[30px] shrink-0 flex-col border-x border-l-[#606060] border-r-[#808080] bg-black font-['Liberation_Sans',sans-serif]">
      <div className="h-[18px] bg-[#808080] pt-[3px]">
        <Svg w={10} h={10}>
          <path d="M0 0h5v5H0z" fill="#e02020" stroke="none" />
          <path d="M5 0h5v5H5z" fill="#2040e0" stroke="none" />
          <path d="M0 5h5v5H0z" fill="#20a020" stroke="none" />
          <path d="M5 5h5v5H5z" fill="#e0e020" stroke="none" />
          <path d="M0 0h10v10H0zM5 0v10M0 5h10" />
        </Svg>
      </div>
      <button aria-label="Folder" className={`mt-[2px] flex h-6 w-6 items-center justify-center border border-white ${dither}`}>
        <Icon name="folder" size={18} />
      </button>
      <span className="mt-1 h-[56px] w-6 text-[17px] leading-6 text-white [writing-mode:vertical-rl]">Office</span>
      <div className="flex flex-col">
        {officeApps.map((a) => (
          <button key={a.name} aria-label={a.name} className={`flex h-[22px] w-[23px] items-center justify-center ${raised}`}>
            <svg width="18" height="18" fill="none" aria-hidden="true">
              <rect x="1" y="1" width="16" height="16" fill={a.bg} />
              {a.mark}
            </svg>
          </button>
        ))}
      </div>
      <span className="mt-auto mb-[14px] w-7 text-[16px] leading-7 font-bold text-[#909090] italic [writing-mode:vertical-rl]">Microsoft</span>
    </nav>
  );
}

function TaskButton({ icon, label, active }: { icon: ReactNode; label: string; active?: boolean }) {
  return (
    <button
      className={`flex h-[22px] w-40 items-center gap-[2px] px-1 whitespace-nowrap ${
        active
          ? `border border-t-[#404040] border-l-[#404040] border-r-white border-b-white font-bold ${dither}`
          : raised
      }`}
    >
      {icon}
      <span className="pt-px">{label}</span>
    </button>
  );
}

function Taskbar() {
  return (
    <footer className={`flex h-7 shrink-0 items-center gap-[3px] border-t border-white pt-px pl-[2px] text-[11px] ${tahoma}`}>
      <button className={`mr-px flex h-[22px] w-[52px] items-center gap-px pl-px font-bold ${raised}`}>
        <svg width="15" height="16" viewBox="0 0 15 16" className="block shrink-0" aria-hidden="true">
          <path d="M2 2q3-2 5 0l-1 5q-3-1-5 0z" fill="#e05020" />
          <path d="M8 3q3 1 6 0l-1 5q-3 1-6 0z" fill="#50a030" />
          <path d="M1 9q3-2 5 0l-1 5q-3-1-5 0z" fill="#2060d0" />
          <path d="M7 9q3 1 6 0l-1 5q-3 1-6 0z" fill="#f0c010" />
        </svg>
        <span className="pt-px">Start</span>
      </button>
      <TaskButton label="(L) CD" icon={<Icon name="folder" size={17} />} />
      <TaskButton
        label="IrfanView"
        icon={
          <svg width="16" height="16" aria-hidden="true">
            <path d="M2 1l4 4 2-5 2 5 4-3-2 5 4 1-4 3 3 4-5-2-1 3-3-3-4 2 1-5-3-2 4-1z" fill="#e00000" />
          </svg>
        }
      />
      <TaskButton label="Electronics Workbenc..." icon={<Logo />} active />
      <TaskButton label="Data Notes 4-27 - Word..." icon={<Icon name="wordpad" size={17} />} />
      <div className="mr-px ml-auto flex h-[22px] items-center gap-[2px] border border-t-[#808080] border-l-[#808080] border-r-white border-b-white pr-3 pl-1">
        <span className="pr-[2px] text-[13px] font-bold">«</span>
        <Svg w={16} h={16}>
          <rect x="1.500" y="1.500" width="8" height="8" fill="#ffff00" />
          <rect x="5.500" y="6.500" width="9" height="8" fill="#00d0e0" />
        </Svg>
        <Svg w={16} h={16}><path d="M2 3l12-1v12l-6-4-6 3z" fill="#20c030" stroke="#006010" /></Svg>
        <Svg w={16} h={16}><path d="M1.500 2.500h13v9h-13zM6 14h6" fill="#606878" /></Svg>
        <svg width="18" height="16" aria-hidden="true">
          <path d="M1 13L7 3h9v9H9l-2 3H3l5-8" fill="none" stroke="#e01010" strokeWidth="2" />
        </svg>
        <time className="pt-px pl-[6px]">2:55 PM</time>
      </div>
    </footer>
  );
}

const menus = ["File", "Edit", "Circuit", "Analysis", "Window", "Help"];

export default function App() {
  return (
    <div className="flex h-screen flex-col overflow-hidden bg-[#d4d0c8] text-black">
      <div className="flex min-h-0 flex-1">
        <div className="relative flex min-w-0 flex-1 flex-col overflow-hidden">
          <header className="flex h-[18px] shrink-0 items-center bg-linear-to-r from-[#0a246a] to-[#a6caf0] pr-[5px] pl-[2px]">
            <Logo />
            <h1 className={`flex-1 text-[11px] font-bold text-white ${tahoma}`}>Electronics Workbench</h1>
            <WindowButtons restore />
          </header>
          <nav className={`flex h-5 shrink-0 items-center gap-[11px] pt-px pl-[5px] text-[11px] ${tahoma}`}>
            {menus.map((m) => (
              <button key={m}>{m}</button>
            ))}
          </nav>
          <Toolbars />
          <CircuitWindow />
          <div className={`mt-[3px] flex h-[19px] shrink-0 gap-[2px] text-[11px] leading-[18px] ${tahoma}`}>
            {["Ready", "7.34 s", "Temp:\u00a0 27"].map((s) => (
              <span key={s} className="w-[99px] border border-t-[#808080] border-l-[#808080] border-r-white border-b-white first:w-[130px]">
                {s}
              </span>
            ))}
            <span className="flex-1 border border-t-[#808080] border-l-[#808080] border-r-white border-b-white" />
          </div>
          <PowerControls />
          <StickyNote />
          <AnalysisGraphs />
        </div>
        <OfficeBar />
      </div>
      <Taskbar />
    </div>
  );
}
